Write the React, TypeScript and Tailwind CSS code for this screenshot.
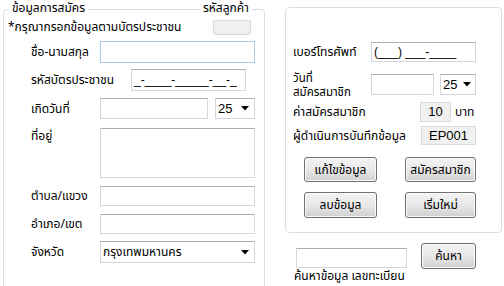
import React from "react";

const font = { fontFamily: "Tahoma, 'Microsoft Sans Serif', 'Noto Sans Thai', 'Noto Sans', sans-serif" };

function Arrow() {
  return (
    <svg width="8" height="5" viewBox="0 0 8 5" className="shrink-0">
      <path d="M0 0 L8 0 L4 4.5 Z" fill="#000" />
    </svg>
  );
}

function Btn({ children, className = "" }: { children: React.ReactNode; className?: string }) {
  return (
    <div
      className={
        "flex items-center justify-center rounded-[3px] border border-[#707070] bg-gradient-to-b from-[#f3f3f3] via-[#e8e8e8] to-[#d0d0d0] text-[12px] text-black shadow-[inset_0_0_0_1px_#fbfbfb] " +
        className
      }
    >
      {children}
    </div>
  );
}

const inputCls = "border border-[#d3d6db] border-t-[#abadb3] bg-white";

export default function App() {
  return (
    <div className="flex h-[286px] w-[504px] overflow-hidden bg-white text-[12px] text-black" style={font}>
      {/* Left group box */}
      <div className="relative ml-[3px] mt-[9px] h-[277px] w-[262px] shrink-0 rounded-t-[4px] border border-b-0 border-[#d5dfe5]">
        <span className="absolute left-[5px] top-[-10px] bg-white px-[3px] leading-[16px]">ข้อมูลการสมัคร</span>
        <span className="absolute right-[12px] top-[-10px] bg-white px-[3px] leading-[16px]">รหัสลูกค้า</span>

        <div className="flex flex-col pl-[4px] pt-[10px]">
          <div className="flex h-[15px] items-start justify-between pr-[13px]">
            <span className="leading-[14px]">*กรุณากรอกข้อมูลตามบัตรประชาชน</span>
            <div className="h-[15px] w-[38px] rounded-[2px] border border-[#d9d9d9] bg-[#f0f0f0]" />
          </div>

          <div className="mt-[6px] flex h-[22px] items-center">
            <span className="w-[92px] pl-[23px]">ชื่อ-นามสกุล</span>
            <div className="h-[22px] w-[155px] border border-[#a9c6e2] bg-white" />
          </div>

          <div className="mt-[6px] flex h-[22px] items-center">
            <span className="w-[123px] pl-[23px]">รหัสบัตรประชาชน</span>
            <div className={"flex h-[22px] w-[115px] items-center overflow-hidden pl-[2px] " + inputCls}>
              <span style={{ fontFamily: "'Liberation Sans', Arial, sans-serif" }} className="whitespace-nowrap text-[12px]">
                _-____-_____-__-_
              </span>
            </div>
          </div>

          <div className="mt-[7px] flex h-[21px] items-center">
            <span className="w-[92px] pl-[23px]">เกิดวันที่</span>
            <div className={"h-[21px] w-[108px] " + inputCls} />
            <div className={"ml-[7px] flex h-[21px] w-[40px] items-center justify-between pl-[2px] pr-[5px] " + inputCls}>
              <span className="text-[13px]" style={{ fontFamily: "'Liberation Sans', Arial, sans-serif" }}>25</span>
              <Arrow />
            </div>
          </div>

          <div className="mt-[9px] flex h-[50px] items-start">
            <span className="w-[92px] pl-[23px] pt-[1px] leading-[14px]">ที่อยู่</span>
            <div className={"h-[50px] w-[155px] " + inputCls} />
          </div>

          <div className="mt-[8px] flex h-[20px] items-center">
            <span className="w-[92px] pl-[23px]">ตำบล/แขวง</span>
            <div className={"h-[20px] w-[155px] " + inputCls} />
          </div>

          <div className="mt-[8px] flex h-[20px] items-center">
            <span className="w-[92px] pl-[23px]">อำเภอ/เขต</span>
            <div className={"h-[20px] w-[155px] " + inputCls} />
          </div>

          <div className="mt-[7px] flex h-[22px] items-center">
            <span className="w-[92px] pl-[23px]">จังหวัด</span>
            <div className={"flex h-[22px] w-[155px] items-center justify-between pl-[2px] pr-[5px] " + inputCls}>
              <span>กรุงเทพมหานคร</span>
              <Arrow />
            </div>
          </div>
        </div>
      </div>

      {/* Right column */}
      <div className="ml-[20px] flex w-[217px] shrink-0 flex-col">
        <div className="mt-[7px] flex h-[226px] flex-col rounded-[4px] border border-[#d9dde2] pl-[7px]">
          <div className="mt-[34px] flex h-[20px] items-center">
            <span className="w-[78px]">เบอร์โทรศัพท์</span>
            <div className={"flex h-[20px] w-[105px] items-center pl-[2px] " + inputCls}>
              <span style={{ fontFamily: "'Liberation Sans', Arial, sans-serif" }}>(___) ___-____</span>
            </div>
          </div>

          <div className="mt-[12px] flex h-[21px] items-center">
            <div className="flex w-[78px] flex-col pt-[3px] text-[11.5px]">
              <span className="leading-[14px]">วันที่</span>
              <span className="leading-[14px]">สมัครสมาชิก</span>
            </div>
            <div className={"h-[21px] w-[63px] " + inputCls} />
            <div className={"ml-[6px] flex h-[21px] w-[36px] items-center justify-between pl-[2px] pr-[4px] " + inputCls}>
              <span className="text-[13px]" style={{ fontFamily: "'Liberation Sans', Arial, sans-serif" }}>25</span>
              <Arrow />
            </div>
          </div>

          <div className="mt-[7px] flex h-[20px] items-center">
            <span className="w-[127px]">ค่าสมัครสมาชิก</span>
            <div
              className="flex h-[20px] w-[31px] items-center justify-center border border-[#dadada] bg-[#f0f0f0] text-[13px]"
              style={{ fontFamily: "'Liberation Sans', Arial, sans-serif" }}
            >
              10
            </div>
            <span className="ml-[4px]">บาท</span>
          </div>

          <div className="mt-[4px] flex h-[19px] items-center">
            <span className="w-[128px]">ผู้ดำเนินการบันทึกข้อมูล</span>
            <div
              className="flex h-[19px] w-[55px] items-center justify-center border border-[#dadada] bg-[#f0f0f0] text-[13px]"
              style={{ fontFamily: "'Liberation Sans', Arial, sans-serif" }}
            >
              EP001
            </div>
          </div>

          <div className="mt-[12px] flex h-[25px] items-center pl-[11px]">
            <Btn className="h-[25px] w-[73px]">แก้ไขข้อมูล</Btn>
            <Btn className="ml-[28px] h-[25px] w-[71px]">สมัครสมาชิก</Btn>
          </div>

          <div className="mt-[10px] flex h-[26px] items-center pl-[11px]">
            <Btn className="h-[26px] w-[73px]">ลบข้อมูล</Btn>
            <Btn className="ml-[28px] h-[26px] w-[71px]">เริ่มใหม่</Btn>
          </div>
        </div>

        <div className="mt-[10px] flex h-[26px] items-center">
          <div className={"ml-[11px] mt-[4px] h-[20px] w-[111px] " + inputCls} />
          <Btn className="ml-[14px] h-[26px] w-[55px]">ค้นหา</Btn>
        </div>
        <span className="ml-[9px] leading-[14px]">ค้นหาข้อมูล เลขทะเบียน</span>
      </div>
    </div>
  );
}
